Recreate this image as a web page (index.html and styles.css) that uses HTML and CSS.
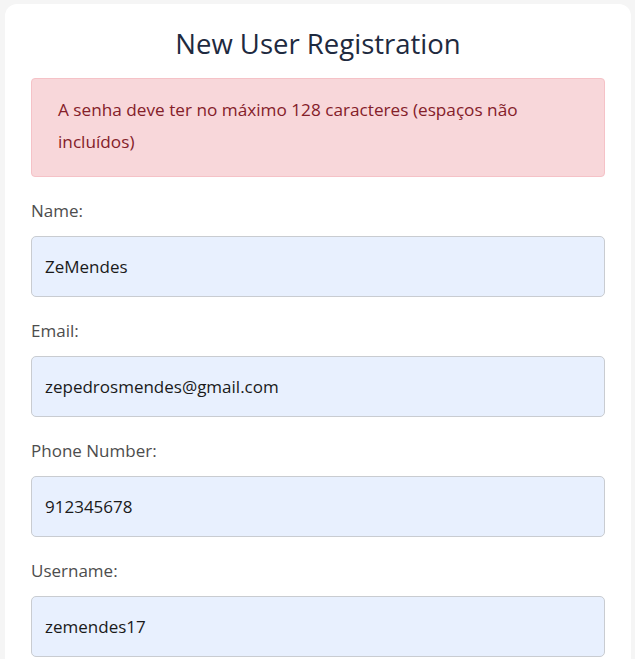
FILE: index.html
```html
<!DOCTYPE html>
<html lang="pt">
<head>
<meta charset="utf-8">
<title>New User Registration</title>
<link rel="stylesheet" href="styles.css">
</head>
<body>
<div class="card">
  <h2 class="title">New User Registration</h2>
  <div class="alert">A senha deve ter no máximo 128 caracteres (espaços não incluídos)</div>
  <form class="form">
    <div class="field">
      <label class="label">Name:</label>
      <div class="input">ZeMendes</div>
    </div>
    <div class="field">
      <label class="label">Email:</label>
      <div class="input">zepedrosmendes@gmail.com</div>
    </div>
    <div class="field">
      <label class="label">Phone Number:</label>
      <div class="input">912345678</div>
    </div>
    <div class="field">
      <label class="label">Username:</label>
      <div class="input">zemendes17</div>
    </div>
  </form>
</div>
</body>
</html>
```
FILE: styles.css
```css
html, body {
  margin: 0;
  padding: 0;
  background: #f5f5f5;
  font-family: "Open Sans", Lato, sans-serif;
}
body {
  padding: 4px 4px 0 5px;
}
.card {
  background: #ffffff;
  border-radius: 12px;
  padding: 22px 26px 0 26px;
  height: 700px;
  box-sizing: border-box;
}
.title {
  margin: 0 0 16px 0;
  text-align: center;
  font-weight: 400;
  font-size: 27.5px;
  line-height: 36px;
  color: #1e2a40;
}
.alert {
  background: #f8d7da;
  border: 1px solid #f5c2c7;
  border-radius: 4px;
  color: #842029;
  padding: 15px 26px 18px;
  font-size: 17.2px;
  line-height: 32px;
}
.form {
  display: flex;
  flex-direction: column;
  gap: 22px;
  margin-top: 22px;
}
.field {
  display: flex;
  flex-direction: column;
  gap: 13px;
}
.label {
  font-size: 17px;
  line-height: 24px;
  color: #4d4d4d;
}
.input {
  height: 61px;
  box-sizing: border-box;
  background: #e8f0fe;
  border: 1px solid #c9ccd1;
  border-radius: 5px;
  padding: 0 13px;
  display: flex;
  align-items: center;
  font-size: 17px;
  color: #1a1a1a;
}
```
